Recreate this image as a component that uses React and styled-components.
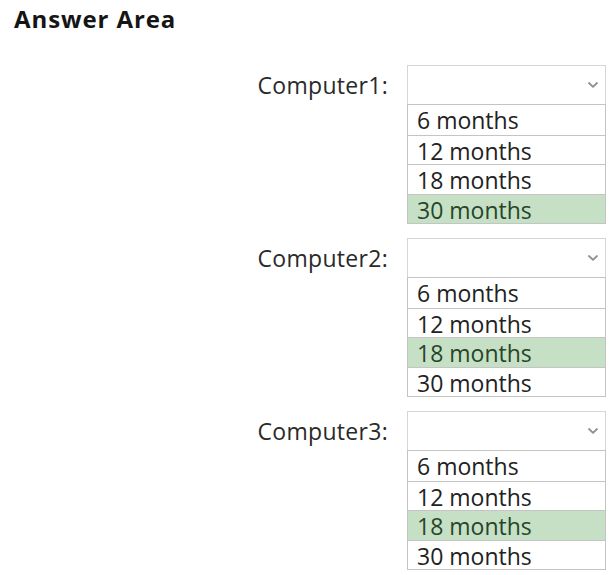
import React from "react";
import styled, { createGlobalStyle } from "styled-components";

const Global = createGlobalStyle`
  html, body { margin: 0; padding: 0; background: #ffffff; }
  body { font-family: "Open Sans", "Noto Sans", sans-serif; color: #222; }
`;

const Page = styled.div`
  width: 611px;
  height: 575px;
  padding: 4px 0 0 14px;
  box-sizing: border-box;
  overflow: hidden;
`;

const Title = styled.h1`
  margin: 0;
  font-size: 24px;
  font-weight: 700;
  line-height: 30px;
  letter-spacing: 0.9px;
  color: #151515;
`;

const Questions = styled.div`
  display: flex;
  flex-direction: column;
  gap: 14px;
  margin-top: 31px;
`;

const Question = styled.div`
  display: grid;
  grid-template-columns: 374px 199px;
  column-gap: 19px;
  align-items: start;
`;

const Label = styled.div`
  height: 39px;
  display: flex;
  align-items: center;
  justify-content: flex-end;
  font-size: 23px;
  color: #2a2a2a;
  letter-spacing: 0.3px;
`;

const Control = styled.div`
  display: flex;
  flex-direction: column;
`;

const Select = styled.div`
  height: 39px;
  box-sizing: border-box;
  border: 1px solid #d6d6d6;
  border-bottom: none;
  display: flex;
  align-items: center;
  justify-content: flex-end;
  padding-right: 6px;
`;

const List = styled.div`
  border: 1px solid #c4c4c4;
  display: flex;
  flex-direction: column;
`;

const Option = styled.div`
  height: 29.5px;
  box-sizing: border-box;
  padding: 1px 0 0 9px;
  font-size: 23px;
  line-height: 28px;
  color: ${(p) => (p.$selected ? "#27452a" : "#222")};
  background: ${(p) => (p.$selected ? "#c5e0c5" : "#fff")};
  border-top: ${(p) => (p.$first ? "none" : "1px solid #c4c4c4")};
  white-space: nowrap;
`;

const Chevron = () => (
  <svg width="12" height="8" viewBox="0 0 12 8">
    <path d="M2 2 L6 5.8 L10 2" fill="none" stroke="#8f8f8f" strokeWidth="1.8" strokeLinecap="round" strokeLinejoin="round" />
  </svg>
);

const options = ["6 months", "12 months", "18 months", "30 months"];

const data = [
  { label: "Computer1:", selected: 3 },
  { label: "Computer2:", selected: 2 },
  { label: "Computer3:", selected: 2 },
];

export default function App() {
  return (
    <Page>
      <Global />
      <Title>Answer Area</Title>
      <Questions>
        {data.map((q) => (
          <Question key={q.label}>
            <Label>{q.label}</Label>
            <Control>
              <Select>
                <Chevron />
              </Select>
              <List>
                {options.map((o, i) => (
                  <Option key={o} $first={i === 0} $selected={i === q.selected}>
                    {o}
                  </Option>
                ))}
              </List>
            </Control>
          </Question>
        ))}
      </Questions>
    </Page>
  );
}
